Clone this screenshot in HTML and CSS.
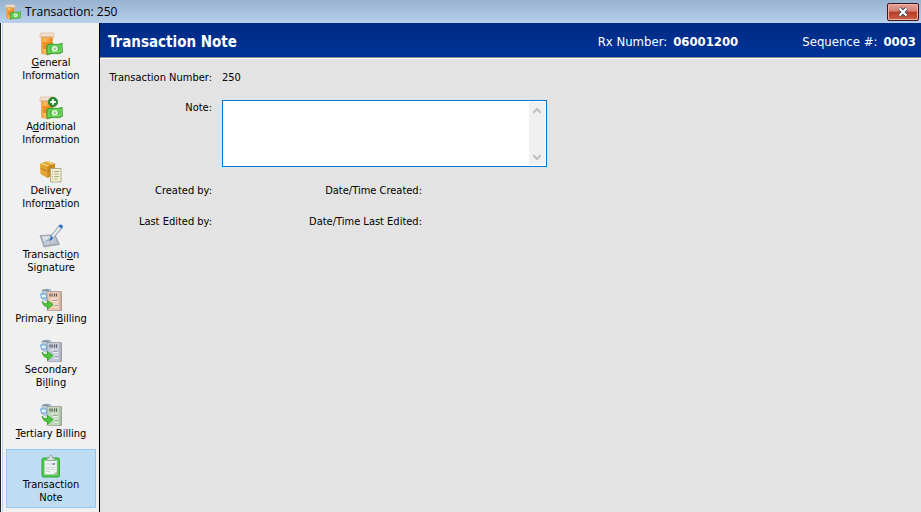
FILE: index.html
```html
<!DOCTYPE html>
<html lang="en">
<head>
<meta charset="utf-8">
<title>Transaction: 250</title>
<link rel="stylesheet" href="styles.css">
</head>
<body>
<svg class="defs" aria-hidden="true">
  <defs>
    <linearGradient id="amber" x1="0" x2="1" y1="0" y2="0"><stop offset="0" stop-color="#ee9a2c"/><stop offset=".3" stop-color="#ffbe5c"/><stop offset="1" stop-color="#ea8418"/></linearGradient>
    <linearGradient id="cash" x1="0" x2="1" y1="0" y2="1"><stop offset="0" stop-color="#48b83c"/><stop offset="1" stop-color="#5ed04e"/></linearGradient>
    <linearGradient id="slate" x1="0" x2="1" y1="0" y2="1"><stop offset="0" stop-color="#e9edf2"/><stop offset="1" stop-color="#a9b4c2"/></linearGradient>
    <symbol id="bottle" viewBox="0 0 24 24">
      <path d="M2.500 5h11v16.500q-5.500 1.800-11 0z" fill="url(#amber)" stroke="#e0a050" stroke-width=".6"/>
      <rect x="1" y="1" width="14" height="4.500" rx="1" fill="#f0e0d0" stroke="#d8b898" stroke-width=".7"/>
      <path d="M2 5h12" stroke="#d89858"/>
      <path d="M4 10h9.500v7H4z" fill="#f58a28"/>
    </symbol>
    <symbol id="money" viewBox="0 0 24 24">
      <path d="M7.500 13.500q4-2.500 8-1.200 4 .6 7.500-1l.5 9q-3.500 2.200-7.500 1.300-4-.7-8 1.400z" fill="url(#cash)" stroke="#35962b" stroke-width=".8"/>
      <path d="M9.500 14.500q3.500-1.500 6.500-.7 3.500.3 6-.8l.4 6q-3 1.300-6 .7-4-.5-6.700.8z" fill="none" stroke="#7cdc6c" stroke-width=".8"/>
      <ellipse cx="15.700" cy="16.800" rx="3.100" ry="2.900" fill="#e3f7dd"/>
      <circle cx="15.700" cy="16.800" r="1.200" fill="#8cc985"/>
    </symbol>
    <symbol id="general" viewBox="0 0 24 24"><use href="#bottle"/><use href="#money"/></symbol>
    <symbol id="additional" viewBox="0 0 24 24">
      <use href="#bottle"/><use href="#money"/>
      <circle cx="14" cy="6" r="4.700" fill="#278b2e" stroke="#17691d" stroke-width=".6"/>
      <path d="M14 3.200v5.600M11.200 6h5.600" stroke="#fff" stroke-width="1.800"/>
    </symbol>
    <symbol id="delivery" viewBox="0 0 24 24">
      <path d="M1 4l7-3 8 2.500v10L8.500 18 1.500 14z" fill="#e0a434"/>
      <path d="M1 4l7-3 8 2.500-7.500 3z" fill="#f2c964"/>
      <path d="M8.500 6.500L16 3.500v10L8.500 18z" fill="#c98a1e"/>
      <path d="M4.500 2.500l7.500 2.700v3M1.500 8.500l7 2.700 7.500-3" fill="none" stroke="#b57a18" stroke-width=".8"/>
      <path d="M11.500 8.500h10.500v13.500h-10.500z" fill="#f3f0d2" stroke="#a5a488" stroke-width=".9"/>
      <path d="M13 11.500h1m1.500 0h4.500M13 14h1m1.500 0h4M13 16.500h1m1.500 0h4.500M13 19h1m1.500 0h3" stroke="#9ca078" stroke-width=".9"/>
    </symbol>
    <symbol id="signature" viewBox="0 0 24 24">
      <path d="M1 11.500l15-.8 4.500 9.800L5 23z" fill="#a4abb5" stroke="#9299a4" stroke-width=".7"/>
      <path d="M2.800 12.500l12.500-.7 3.500 7.700-13 1.800z" fill="url(#slate)"/>
      <path d="M6 18.500c2-3 3-1 4.500-3.500" fill="none" stroke="#6b9bcf"/>
      <path d="M10.500 17l1.200-4.500L20 1.500q2-1.500 3.300.2.800 1-.3 2.500L14 14.500z" fill="#d3dbe5" stroke="#8193ab" stroke-width=".8"/>
      <path d="M19.500 2q2.300-2.200 3.800-.3.800 1-.7 3zM12 12l2.300 2-3.800 3z" fill="#2272c0"/>
      <path d="M14 12l6-8" stroke="#fff"/>
    </symbol>
    <symbol id="billing" viewBox="0 0 24 24">
      <path d="M3 2.500l5-1.500 4 1v10l-5 1-4-2z" fill="#b9d0e4" stroke="#88a3bc" stroke-width=".6"/>
      <path d="M3.500 1.500h6.500v1.500h-6.500z" fill="#858c95"/>
      <path d="M1.500 6h5.500l1 4h-5.500z" fill="#e8f6ff" stroke="#5a9fd8"/>
      <path d="M8 3.500h14.500v19H8.500z" fill="currentColor" stroke="#97888a" stroke-width=".6"/>
      <path d="M20.500 4h2v18.500h-2z" fill="#000" opacity=".12"/>
      <path d="M11 5.500v3m2-3v3m2.500-3v3m2-3v3" stroke="#5b5457" stroke-width="1.100"/>
      <path d="M11.500 11h7.500M14 13.500h5m-4 2.500h4m-4 3h4" stroke="#fff" opacity=".75"/>
      <path d="M14 12.300h4.500M16 17.500h3" stroke="#8c7c7e" stroke-width=".7"/>
      <path d="M3 13q2 3.300 5.500 2.500v-3l5.500 4-5.500 5v-3Q4 19 3 13z" fill="#4cc638" stroke="#2f9a28" stroke-width=".7"/>
    </symbol>
    <symbol id="note" viewBox="0 0 24 24">
      <rect x="3" y="4" width="17.500" height="19" rx="1.500" fill="#4cc84a" stroke="#33a836"/>
      <path d="M5.500 6.500h12.500v14H5.500z" fill="#f0f2f4" stroke="#b0c9b0" stroke-width=".5"/>
      <path d="M8 6.500V4h2q0-3 1.700-3t1.700 3h2v2.500z" fill="#dbe1df" stroke="#869b8a" stroke-width=".8"/>
      <path d="M7 9h6v2H7z" fill="#dde1e7"/><path d="M13.500 9h2.500v2h-2.500z" fill="#7c96c0"/>
      <path d="M7 13.500h4m1 0h4m-9 2h4m1 0h4m-9 2h4" stroke="#ccd2d5"/>
      <path d="M18 17v3.500h-3.500z" fill="#aab7ae"/>
    </symbol>
  </defs>
</svg>

<div class="window">
  <header class="titlebar">
    <svg class="app-icon" aria-hidden="true"><use href="#general"/></svg>
    <span class="window-title">Transaction: 250</span>
    <button class="close" type="button" aria-label="Close">
      <svg viewBox="0 0 12 10" aria-hidden="true"><path d="M2.500 1.500l7 7m0-7l-7 7" class="cross-edge"/><path d="M2.500 1.500l7 7m0-7l-7 7" class="cross"/></svg>
    </button>
  </header>
  <div class="body">
    <nav class="sidebar">
      <a class="item" href="#"><svg aria-hidden="true"><use href="#general"/></svg><span><u>G</u>eneral<br>Information</span></a>
      <a class="item" href="#"><svg aria-hidden="true"><use href="#additional"/></svg><span>A<u>d</u>ditional<br>Information</span></a>
      <a class="item" href="#"><svg aria-hidden="true"><use href="#delivery"/></svg><span>Delivery<br>Infor<u>m</u>ation</span></a>
      <a class="item" href="#"><svg aria-hidden="true"><use href="#signature"/></svg><span>Transacti<u>o</u>n<br>Signature</span></a>
      <a class="item" href="#"><svg class="primary" aria-hidden="true"><use href="#billing"/></svg><span>Primary <u>B</u>illing</span></a>
      <a class="item" href="#"><svg class="secondary" aria-hidden="true"><use href="#billing"/></svg><span>Secondary<br>Bi<u>l</u>ling</span></a>
      <a class="item" href="#"><svg class="tertiary" aria-hidden="true"><use href="#billing"/></svg><span><u>T</u>ertiary Billing</span></a>
      <a class="item selected" href="#" aria-current="page"><svg aria-hidden="true"><use href="#note"/></svg><span>Transaction<br>Note</span></a>
    </nav>
    <main class="main">
      <div class="banner">
        <h1>Transaction Note</h1>
        <dl class="facts">
          <div><dt>Rx Number:</dt><dd>06001200</dd></div>
          <div><dt>Sequence #:</dt><dd>0003</dd></div>
        </dl>
      </div>
      <form class="form">
        <span class="label">Transaction Number:</span>
        <output class="wide">250</output>
        <label class="label spaced" for="note-text">Note:</label>
        <div class="note-box wide">
          <textarea id="note-text"></textarea>
          <div class="scroll" aria-hidden="true">
            <svg viewBox="0 0 8 6"><path d="M0 5l4-4 4 4"/></svg>
            <svg viewBox="0 0 8 6"><path d="M0 1l4 4 4-4"/></svg>
          </div>
        </div>
        <span class="label spaced">Created by:</span>
        <span class="label second spaced">Date/Time Created:</span>
        <span class="label spaced">Last Edited by:</span>
        <span class="label second spaced">Date/Time Last Edited:</span>
      </form>
    </main>
  </div>
</div>
</body>
</html>
```
FILE: styles.css
```css
* { box-sizing: border-box; }

body {
  margin: 0;
  font: 11px/13px Tahoma, "DejaVu Sans Condensed", "DejaVu Sans", sans-serif;
  color: #000;
}

.defs { position: absolute; width: 0; height: 0; }

.window {
  display: flex;
  flex-direction: column;
  min-height: 100vh;
}

.titlebar {
  display: flex;
  align-items: center;
  height: 23px;
  padding: 0 2px 0 5px;
  background: linear-gradient(#98b3d0, #b8d0ea);
}

.app-icon { width: 16px; height: 16px; margin-right: 4px; }

.window-title {
  font-family: "Segoe UI", "Open Sans", sans-serif;
  font-size: 12px;
  line-height: 16px;
}

.close {
  display: grid;
  place-items: center;
  width: 32px;
  height: 18px;
  margin-left: auto;
  padding: 0;
  border: 1px solid #43141c;
  border-radius: 2px;
  background: linear-gradient(#e6a198, #d58273 45%, #b83b25 50%, #cb6249);
  box-shadow: inset 0 0 0 1px #e9b5aa;
}

.close svg { width: 12px; height: 10px; }
.cross-edge { stroke: #4d4d5e; stroke-width: 4; }
.cross { stroke: #fff; stroke-width: 2; }

.body { display: flex; flex: 1; }

.sidebar {
  display: flex;
  flex-direction: column;
  gap: 5px;
  width: 100px;
  padding: 4px 3px;
  border-left: 1px solid #20242a;
  border-right: 1px solid #000;
  box-shadow: inset 1px 0 #fff, inset 2px 0 #b9d3ee;
  background: #f0f0f0;
}

.item {
  display: flex;
  flex-direction: column;
  align-items: center;
  margin-left: 2px;
  padding: 4px 0 3px;
  border: 1px solid transparent;
  color: #000;
  text-align: center;
  text-decoration: none;
}

.item svg { width: 24px; height: 24px; }
.item.selected { border-color: #90c8f6; background: #c0dcf3; }

.primary { color: #e9c8b0; }
.secondary { color: #bfc9da; }
.tertiary { color: #bdd8b8; }

.main { flex: 1; background: #e3e3e3; }

.banner {
  display: flex;
  align-items: center;
  justify-content: space-between;
  height: 36px;
  padding: 2px 5px 0 8px;
  border-bottom: 1px solid #fff;
  box-shadow: inset 0 -1px #8b8b8b;
  background: linear-gradient(#002b85, #003399);
  color: #fff;
}

.banner h1 { margin: 0; font-size: 15px; line-height: 18px; }

.facts {
  display: flex;
  gap: 64px;
  margin: 0;
  font-size: 13px;
  line-height: 16px;
}

.facts div { display: flex; gap: 6px; }
.facts dd { margin: 0; font-weight: bold; }

.form {
  display: grid;
  grid-template-columns: 104px 200px 1fr;
  gap: 16px 10px;
  align-items: start;
  padding: 12px 8px;
}

.label { grid-column: 1; text-align: right; }
.second { grid-column: 2; }
.wide { grid-column: 2 / -1; }
.spaced { padding: 1px 0; }

.note-box {
  display: flex;
  width: 325px;
  max-width: 100%;
  height: 67px;
  padding: 1px;
  border: 1px solid #0078d7;
  background: #fff;
}

.note-box textarea {
  flex: 1;
  min-width: 0;
  padding: 2px;
  border: 0;
  outline: 0;
  resize: none;
  background: #fff;
  font: inherit;
}

.scroll {
  display: flex;
  flex-direction: column;
  justify-content: space-between;
  align-items: center;
  width: 16px;
  padding: 6px 0 5px;
  background: #f0f0f0;
}

.scroll svg { width: 8px; height: 6px; }
.scroll path { fill: none; stroke: #bfbfbf; stroke-width: 2; }
```
